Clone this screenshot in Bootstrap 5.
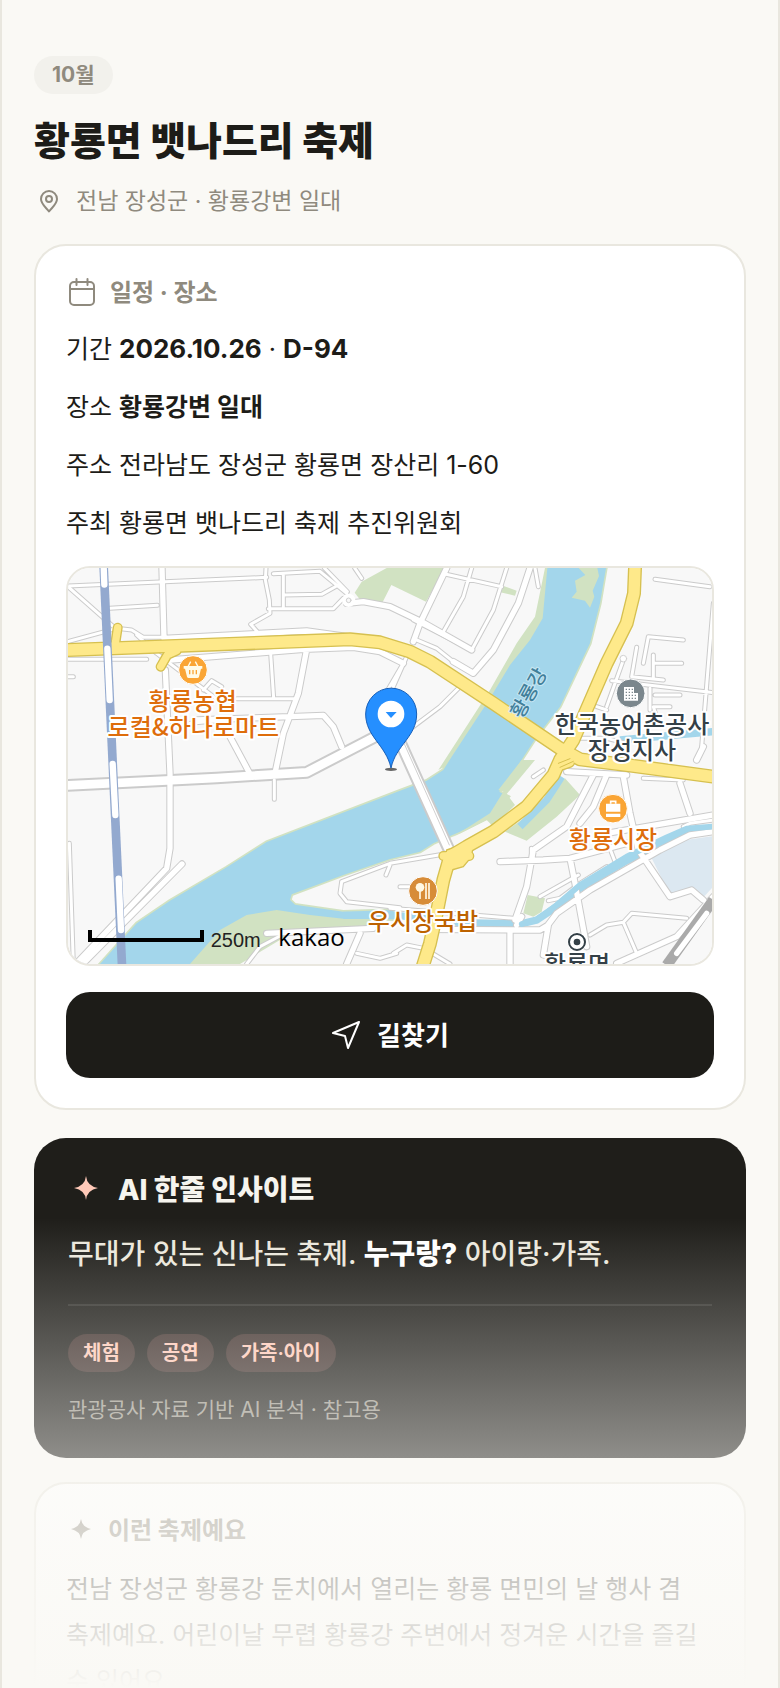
<!DOCTYPE html>
<html lang="ko">
<head>
<meta charset="utf-8">
<meta name="viewport" content="width=device-width, initial-scale=1">
<title>황룡면 뱃나드리 축제</title>
<link href="https://cdn.jsdelivr.net/npm/bootstrap@5.3.0/dist/css/bootstrap.min.css" rel="stylesheet">
<style>
  :root { --paper: #faf9f5; --ink: #1d1c18; --muted: #8f8a7e; --line: #e9e7df; }
  body { background: var(--paper); color: var(--ink); font-family: Inter, "Noto Sans CJK KR", sans-serif; font-size: 25px; line-height: 42px; word-break: keep-all; }
  .phone { height: 100vh; border: solid var(--line); border-width: 0 2px; padding: 56px 32px 0; }
  .month { width: fit-content; background: #f2f1ec; color: var(--muted); font-size: 21px; font-weight: 700; line-height: 38px; padding: 0 18px; }
  .title { font-size: 39px; font-weight: 800; line-height: 48px; margin: 23px 0 18px; }
  .place { color: var(--muted); font-size: 23px; line-height: 36px; gap: 15px; margin-bottom: 25px; }
  .place svg { margin-left: 3px; }
  .panel { background: #fff; border: 2px solid var(--line); border-radius: 32px; padding: 30px; }
  .panel-title { color: var(--muted); font-size: 24px; font-weight: 700; line-height: 34px; gap: 12px; margin: 0 0 18px; }
  .facts { gap: 16px; }
  .facts strong { font-weight: 700; }
  .facts .when { font-size: 26px; }
  .map { height: 400px; border: 2px solid var(--line); border-radius: 24px; margin: 22px 0 26px; overflow: hidden; }
  .route { background: var(--ink); color: #fff; border: 0; border-radius: 24px; height: 86px; font-size: 26px; font-weight: 700; gap: 16px; }
  .route:hover { background: #33312b; color: #fff; }
  .insight { background: #1f1e1a; color: #ebe7dc; border-radius: 32px; padding: 34px 34px 32px; margin: 28px 0 24px; }
  .insight h2 { color: #f6f4ee; font-size: 28px; font-weight: 800; line-height: 36px; gap: 14px; margin: 0 0 24px; }
  .insight .say { font-size: 28px; line-height: 44px; font-weight: 500; margin: 0 0 28px; }
  .insight .say strong { color: #fff; font-weight: 800; }
  .tags { border-top: 2px solid #34332f; padding-top: 28px; gap: 12px; margin-bottom: 22px; }
  .tag { background: #40312d; color: #ffc9b8; font-size: 20px; font-weight: 600; line-height: 38px; padding: 0 15px; }
  .source { color: #9a968b; font-size: 21px; line-height: 32px; }
  .about { line-height: 46px; }
  .fade-out { height: 470px; background: linear-gradient(rgba(250,249,245,0), #faf9f5); pointer-events: none; }
  .lbl { font-family: "Noto Sans CJK KR", sans-serif; font-size: 72px; font-weight: 500; text-anchor: middle; paint-order: stroke; stroke: #fff; stroke-width: 12px; stroke-linejoin: round; }
  .casing { --edge: 6px; stroke: #cbcbcb; }
  .roadbed { --edge: 0px; stroke: #fff; }
  .w1 { stroke-width: calc(9px + var(--edge)); }
  .w2 { stroke-width: calc(16px + var(--edge)); }
  .w3 { stroke-width: calc(26px + var(--edge) + var(--edge)); }
  .casing .w3 { stroke: #c4c4c4; }
  .river-edge { fill: #d1e2c2; stroke: #d1e2c2; stroke-width: 10px; }
</style>
</head>
<body>
<main class="phone position-relative overflow-hidden">
  <header>
    <div class="month rounded-pill">10월</div>
    <h1 class="title">황룡면 뱃나드리 축제</h1>
    <p class="place d-flex align-items-center">
      <svg width="24" height="24" viewBox="0 0 24 24" fill="none" stroke="currentColor" stroke-width="2" stroke-linejoin="round" aria-hidden="true"><path d="M12 22.500C9 18.500 4 15 4 10a8 8 0 0 1 16 0c0 5-5 8.500-8 12.500z"/><circle cx="12" cy="10" r="3"/></svg>
      <span>전남 장성군 · 황룡강변 일대</span>
    </p>
  </header>

  <section class="panel">
    <h2 class="panel-title d-flex align-items-center">
      <svg width="32" height="32" viewBox="0 0 32 32" fill="none" stroke="currentColor" stroke-width="2" stroke-linecap="round" aria-hidden="true"><rect x="4" y="5" width="24" height="23" rx="4"/><path d="M4 12h24M10.500 2v6M21.500 2v6"/></svg>
      <span>일정 · 장소</span>
    </h2>
    <div class="facts d-flex flex-column">
      <div>기간 <strong class="when">2026.10.26</strong> · <strong class="when">D-94</strong></div>
      <div>장소 <strong>황룡강변 일대</strong></div>
      <div>주소 전라남도 장성군 황룡면 장산리 1-60</div>
      <div>주최 황룡면 뱃나드리 축제 추진위원회</div>
    </div>

    <div class="map">
      <svg class="d-block w-100 h-100" viewBox="24 24 1932 1188" preserveAspectRatio="xMidYMid slice" role="img" aria-label="황룡강변 일대 지도">
        <defs>
          <path id="river" d="M120 1212L230 1090 330 1022 500 922 620 846 1020 692 1100 662 1150 630 1175 590 1290 415 1350 315 1410 240 1448 175 1462 24H1638L1620 130 1590 250 1500 440 1430 530 1365 630 1318 695 1345 710 1290 770 1200 815 1120 850 1080 875 990 897 850 945 695 1003 690 1020 705 1034 850 1055 1000 1050V1078L850 1076 750 1065 650 1050 560 1065 480 1110 390 1212z"/>
          <g id="streets">
            <g class="w1">
              <path d="M24 78L620 52M150 145L292 136M24 350H40M24 245L170 205 215 210 250 232H305M24 298H260M640 41L780 34 860 100M670 41V140M625 146H820L850 115M670 105L785 103 830 78M618 24L616 60 628 120 630 160 572 193 592 215M793 24L862 95M884 24L905 55M632 280L641 415M530 416H710M430 390L455 362 485 380M390 490L500 480M1155 42L1325 80M1235 24L1210 110 1150 215M1340 24L1300 150 1235 270 1060 180M1425 24L1435 80M1070 240L1130 265 1180 305M1040 290L1000 380M960 430L1030 310M1200 380L1140 440 1060 500"/>
              <path d="M1785 58L1950 80M1870 240L1765 230 1750 310M1730 262L1715 350 1810 360M1785 310H1865M1780 285V350M1690 300L1640 440M1655 362L1960 398M1785 405H1860M1770 385V450M1830 440H1780L1790 470M1610 440L1640 450M1960 130L1925 560M1560 535H1640L1700 550M1870 660L1750 655M1465 1022L1500 1015 1560 970 1640 920M1640 840L1665 905M1020 980H1050M990 1045L1375 1076M1590 1125L1640 1095 1690 1087 1730 1180M1690 1087L1715 1060 1880 1075M990 910L1140 884M845 965L990 910M845 965L840 1000 860 1025 1020 1043M990 915L978 945M1100 1170L1170 1212M1000 1180L1040 1155 1090 1165M560 1212L600 1160 660 1128M890 1180L960 1195 1010 1180"/>
              <path d="M28 850L40 1212M24 80L160 200M230 225L290 280 500 440M1440 1010L1555 945M1870 800L1890 790 1960 780M1420 650L1450 630M643 660V718M1414 865V890"/>
            </g>
            <g class="w2">
              <path d="M306 24L312 235 740 213 880 232M330 300L730 268 880 262 960 275 1030 310M740 268L715 400 670 520 645 640M316 330L330 640V865L320 925 40 1220M366 912L60 1220M510 530L568 638M410 480L690 470 790 466 820 500 845 560M1160 24L1080 190 1060 245M860 130L910 125 990 140 1090 188 1235 270M1410 24L1375 130 1300 270 1240 340 1180 305M1320 905L1450 900 1530 895 1700 850M1420 870L1400 980 1365 1080M1530 895L1545 970 1580 1160M1090 1108L1440 1110 1465 1095 1450 1185M1350 1110L1350 1212M1370 1095L1385 1070M620 1120L940 1105M900 1120L860 1212M1460 1100L1490 1060 1590 990 1800 870 1890 825 1960 815M1690 650L1710 760 1735 870 1830 1010 1895 990 1930 1020M1670 1210L1850 1130 1960 1010M1860 670L1890 760M1640 820L1960 765M1520 635L1700 645M1910 600L1930 560M1600 645L1520 800 1420 870M1640 645L1600 740 1560 790"/>
            </g>
            <g class="w3">
              <path d="M24 676L470 654 740 637 970 518M1020 545L1165 865"/>
            </g>
          </g>
          <g id="highways">
            <path d="M24 270L870 238 960 247 1050 275 1110 305 1300 430 1500 565 1560 598 1700 615 1960 650"/>
            <path d="M1725 24L1722 100 1700 190 1640 310 1540 540 1500 600 1480 645 1400 740 1300 815 1220 860 1170 890 1150 960 1130 1060 1110 1150 1088 1220"/>
          </g>
          <g id="ramps">
            <path d="M173 203L166 250M302 320L322 285 350 272M1490 622L1530 608M1150 888H1228"/>
          </g>
        </defs>
        <path fill="#f8f8f8" d="M0 0h2000v1240H0z"/>
        <use href="#river" class="river-edge"/>
        <g fill="#d1e2c2">
          <path d="M390 1212L480 1110 560 1065 650 1050 750 1065 850 1078H960L920 1106 700 1116 540 1212zM884 98L905 65 980 24H1152L1135 60 1098 125 994 75 965 132 905 125zM1322 75L1370 92 1365 107 1318 96zM1403 1005L1455 1015 1445 1055 1420 1070 1390 1060z"/>
          <path d="M1455 24L1425 170 1370 250 1290 390 1180 560 1135 630 1175 610 1450 220 1475 24z"/>
        </g>
        <use href="#river" fill="#a3d6eb"/>
        <path fill="#d1e2c2" d="M1556 24L1576 45 1545 62 1550 95 1535 113 1575 122 1590 143 1603 110 1598 92 1617 48 1612 24zM1425 600L1340 702 1365 735 1300 800 1280 780 1180 830 1290 760 1330 695 1315 690 1385 600zM1515 655L1560 705 1490 770 1400 842 1335 815 1440 740z"/>
        <path fill="none" stroke="#a3d6eb" stroke-width="22" d="M1505 650L1460 720 1380 800M850 1066L1010 1066 1200 1088 1380 1092 1430 1080 1490 1040 1560 985 1700 902 1820 842 1880 812 1960 805M1680 540L1960 515"/>
        <path fill="#dce8f1" d="M1775 895L1860 842 1960 828V980L1925 1018 1890 985 1830 1005z"/>
        <g fill="none" stroke-linecap="round" stroke-linejoin="round">
          <use href="#streets" class="casing"/>
          <use href="#streets" class="roadbed"/>
          <path stroke="#a3d6eb" stroke-width="17" d="M1385 1092L1430 1080 1490 1035 1560 975 1700 890 1820 832 1880 806 1965 799"/>
          <circle cx="866" cy="121" r="14" stroke="#fff" stroke-width="12"/>
          <circle cx="866" cy="121" r="7" stroke="#d0d0d0" stroke-width="3" fill="#f8f8f8"/>
          <circle cx="1690" cy="296" r="10" stroke="#d0d0d0" stroke-width="3" fill="#fff"/>
          <path stroke="#d0d0d0" stroke-width="3" d="M1030 545L1168 855"/>
          <use href="#ramps" stroke="#d6c050" stroke-width="30"/>
          <use href="#highways" stroke="#d6c050" stroke-width="42"/>
          <path fill="#fee98a" stroke="#d6c050" stroke-width="4" d="M1150 910L1160 870 1195 858 1240 850 1235 890 1210 920 1175 930 1150 980z"/>
          <use href="#highways" stroke="#fee98a" stroke-width="34"/>
          <use href="#ramps" stroke="#fee98a" stroke-width="22"/>
          <path stroke="#d6c050" stroke-width="3" d="M1495 610l35-14M1500 622l40-18"/>
        </g>
        <path stroke="#93a9cf" stroke-width="26" d="M131 20L186 1216"/>
        <path stroke="#fff" stroke-width="19" stroke-linecap="round" d="M131 20L133 74M142 266L149 420M158 612L166 765M176 956L183 1110"/>
        <path stroke="#aaa" stroke-width="32" d="M1960 1020L1820 1216"/>
        <path stroke="#fff" stroke-width="16" stroke-linecap="round" d="M1940 1060L1850 1180"/>

        <path fill="none" stroke="#000" stroke-width="12" d="M90 1110V1140H426V1110"/>
        <text x="452" y="1162" font-family="Liberation Sans, sans-serif" font-size="60" fill="#222">250m</text>
        <text x="655" y="1157" font-family="Open Sans, sans-serif" font-size="72" font-weight="500">kakao</text>

        <g stroke="#fff" stroke-width="3">
          <circle cx="399" cy="330" r="43" fill="#faa535"/><circle cx="1712" cy="400" r="43" fill="#7b878d"/>
          <circle cx="1659" cy="746" r="43" fill="#faa535"/><circle cx="1089" cy="993" r="43" fill="#d78c38"/>
        </g>
        <path fill="#fffbe8" d="M371 318h56v8h-4l-6 24q-1 4-5 4h-26q-4 0-5-4l-6-24h-4z"/>
        <path fill="none" stroke="#fffbe8" stroke-width="4" d="M384 320l8-15M414 320l-8-15"/>
        <path stroke="#faa535" stroke-width="4" d="M389 330v13M399 330v13M409 330v13"/>
        <path fill="#fff" d="M1692 381h30v18h12v23h-42z"/>
        <path stroke="#7b878d" stroke-width="4" stroke-dasharray="4 5" d="M1697 388h22M1697 397h22M1697 406h34M1697 415h34"/>
        <path fill="#fff" d="M1638 731h43v24h-43zM1638 761h43v10h-43z"/><path fill="none" stroke="#fff" stroke-width="5" d="M1652 731v-7h15v7"/>
        <circle cx="1080" cy="982" r="13" fill="#fff8e4"/><path stroke="#fff8e4" stroke-width="5" d="M1080 990v27M1098 969v48M1107 969v48"/>
        <circle cx="1551" cy="1146" r="29" fill="#fff"/><circle cx="1551" cy="1146" r="24" fill="#fff" stroke="#344047" stroke-width="6"/><circle cx="1551" cy="1146" r="10" fill="#344047"/>

        <g class="lbl">
          <g fill="#de6d0b"><text x="398" y="450">황룡농협</text><text x="400" y="529">로컬&amp;하나로마트</text><text x="1659" y="865">황룡시장</text></g>
          <text x="1089" y="1111" fill="#bd6200">우시장국밥</text>
          <g fill="#344047"><text x="1716" y="518">한국농어촌공사</text><text x="1716" y="597">장성지사</text><text x="1551" y="1240">황룡면</text></g>
        </g>
        <text transform="translate(1408 400) rotate(-61)" font-size="58" y="18" text-anchor="middle" fill="#42809b" stroke="#c7e6f2" stroke-width="6" paint-order="stroke" font-weight="500" font-family="Noto Sans CJK KR, sans-serif">황룡강</text>

        <ellipse cx="993" cy="628" rx="18" ry="5" fill="#666"/>
        <path fill="#258fff" stroke="#175fb8" stroke-width="3" d="M993 624C978 555 917 530 917 462a76 77 0 0 1 153 0C1070 530 1008 555 993 624z"/>
        <circle cx="993" cy="462" r="40" fill="#fff"/><path fill="#258fff" d="M977 456h33l-17 18z"/>
      </svg>
    </div>

    <button type="button" class="route btn w-100 d-flex align-items-center justify-content-center">
      <svg width="30" height="30" viewBox="0 0 30 30" fill="none" stroke="currentColor" stroke-width="2" stroke-linejoin="round" aria-hidden="true"><path d="M28 2L2 13l12 3 3 12z"/></svg>
      <span>길찾기</span>
    </button>
  </section>

  <section class="insight">
    <h2 class="d-flex align-items-center">
      <svg width="36" height="36" viewBox="0 0 36 36" fill="#ffc9b8" aria-hidden="true"><path d="M18 4Q19 14 30 16 19 18 18 28 17 18 6 16 17 14 18 4z"/></svg>
      <span>AI 한줄 인사이트</span>
    </h2>
    <p class="say">무대가 있는 신나는 축제. <strong>누구랑?</strong> 아이랑·가족.</p>
    <div class="tags d-flex flex-wrap">
      <span class="tag rounded-pill">체험</span><span class="tag rounded-pill">공연</span><span class="tag rounded-pill">가족·아이</span>
    </div>
    <div class="source">관광공사 자료 기반 AI 분석 · 참고용</div>
  </section>

  <section class="panel">
    <h2 class="panel-title d-flex align-items-center">
      <svg width="30" height="30" viewBox="0 0 30 30" fill="currentColor" aria-hidden="true"><path d="M15 3Q16 11 25 13 16 15 15 23 14 15 5 13 14 11 15 3z"/></svg>
      <span>이런 축제예요</span>
    </h2>
    <p class="about mb-0">전남 장성군 황룡강 둔치에서 열리는 황룡 면민의 날 행사 겸 축제예요. 어린이날 무렵 황룡강 주변에서 정겨운 시간을 즐길 수 있어요.</p>
  </section>
  <div class="fade-out position-absolute start-0 end-0 bottom-0"></div>
</main>
<script src="https://cdn.jsdelivr.net/npm/bootstrap@5.3.0/dist/js/bootstrap.bundle.min.js"></script>
</body>
</html>
